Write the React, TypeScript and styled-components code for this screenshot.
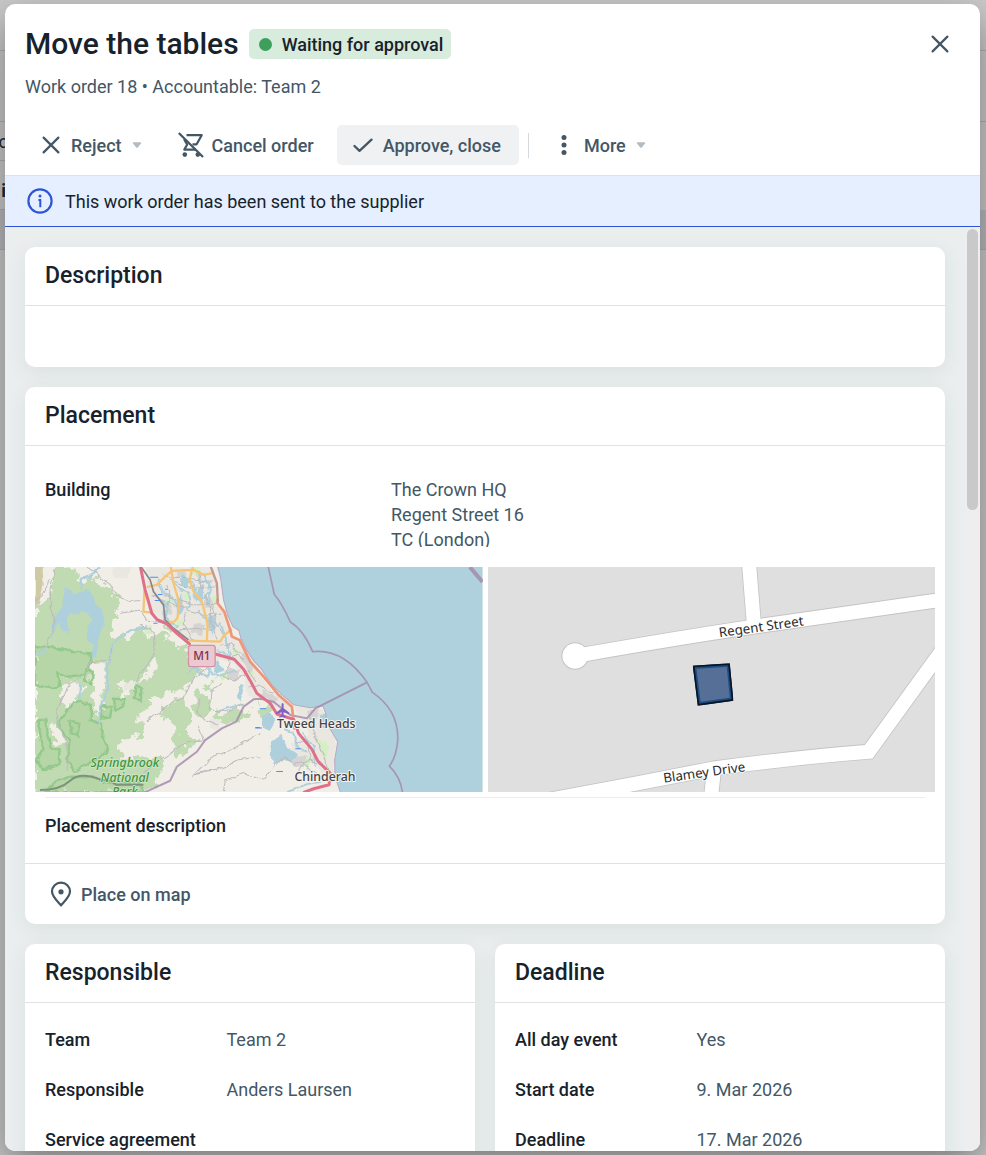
import React from "react";
import styled, { createGlobalStyle } from "styled-components";

const color = {
  ink: "#17222b",
  slate: "#435766",
  line: "#dfe1e2",
  canvas: "#eaeeef",
  blue: "#2f55d4",
};

const GlobalStyle = createGlobalStyle`
  *, *::before, *::after { box-sizing: border-box; }
  html, body, #root { height: 100%; }
  body {
    margin: 0;
    overflow: hidden;
    font-family: Roboto, "Liberation Sans", sans-serif;
    font-size: 18px;
    line-height: 25px;
    color: ${color.ink};
    background: #cacaca;
  }
  h1, h2, p, dl, dt, dd { margin: 0; }
  button { font: inherit; cursor: pointer; }
`;

/* Dimmed page that sits behind the dialog */
const Backdrop = styled.div`
  position: fixed;
  inset: 0;
  background: #cacaca;
  overflow: hidden;
`;

const BackdropBar = styled.div<{ $height: number; $shade?: string }>`
  height: ${(p) => p.$height}px;
  border-bottom: 1px solid #aeaeae;
  background: ${(p) => p.$shade ?? "transparent"};
`;

const BackdropCell = styled(BackdropBar)<{ $bold?: boolean }>`
  display: flex;
  align-items: center;
  justify-content: flex-end;
  width: ${(p) => (p.$bold ? 6 : 8)}px;
  padding-top: ${(p) => (p.$bold ? 10 : 0)}px;
  color: #1b2a36;
  font-weight: ${(p) => (p.$bold ? 700 : 400)};
`;

const Stage = styled.div`
  position: fixed;
  inset: 0;
  display: flex;
  padding: 4px 6px 4px 5px;
`;

const Dialog = styled.section`
  flex: 1;
  min-width: 0;
  display: flex;
  flex-direction: column;
  overflow: hidden;
  border-radius: 10px;
  background: #fff;
  box-shadow: 0 15px 40px rgba(0, 0, 0, 0.4);
`;

const Header = styled.header`
  padding: 20px 20px 10px;
  border-bottom: 1px solid ${color.line};
`;

const TitleRow = styled.div`
  display: flex;
  align-items: center;
  gap: 10px;
  height: 40px;
`;

const Title = styled.h1`
  font-size: 30px;
  line-height: 40px;
  font-weight: 500;
`;

const StatusChip = styled.span`
  display: flex;
  align-items: center;
  gap: 10px;
  height: 30px;
  padding: 0 8px 0 10px;
  border-radius: 5px;
  background: #d8ecdd;
  font-weight: 500;

  &::before {
    content: "";
    width: 13px;
    height: 13px;
    border-radius: 50%;
    background: #3ca05c;
  }
`;

const CloseButton = styled.button`
  display: grid;
  place-items: center;
  width: 40px;
  height: 40px;
  margin-left: auto;
  padding: 0;
  border: 0;
  background: none;
  color: ${color.slate};
`;

const Subtitle = styled.p`
  margin-top: 10px;
  color: ${color.slate};
`;

const Toolbar = styled.div`
  display: flex;
  align-items: center;
  gap: 5px;
  margin-top: 26px;
`;

const ToolButton = styled.button<{ $active?: boolean; $tight?: boolean; $menu?: boolean }>`
  display: flex;
  align-items: center;
  gap: ${(p) => (p.$tight ? 8 : 10)}px;
  height: 40px;
  padding: 0 ${(p) => (p.$menu ? 15 : 18)}px 0 16px;
  border: 0;
  border-radius: 5px;
  background: ${(p) => (p.$active ? "#f0f1f3" : "transparent")};
  color: ${color.slate};
  font-weight: 500;
  white-space: nowrap;
`;

const ToolDivider = styled.span`
  width: 1px;
  height: 25px;
  margin: 0 4px;
  background: #d3d9dd;
`;

const Banner = styled.div`
  display: flex;
  align-items: center;
  gap: 12px;
  height: 51px;
  padding: 0 22px;
  border-bottom: 1px solid ${color.blue};
  background: #e5efff;
  flex: none;
  svg { color: ${color.blue}; }
`;

const Body = styled.div`
  flex: 1;
  min-height: 0;
  display: flex;
  background: ${color.canvas};
`;

const Content = styled.main`
  flex: 1;
  min-width: 0;
  display: flex;
  flex-direction: column;
  gap: 20px;
  padding: 20px;
  overflow-y: auto;
  scrollbar-width: none;
`;

const ScrollTrack = styled.div`
  flex: none;
  width: 15px;
  padding: 2px;
  background: #eeeeee;
`;

const ScrollThumb = styled.div`
  width: 11px;
  height: 281px;
  border-radius: 6px;
  background: #c9c9c9;
`;

const Card = styled.section`
  flex: none;
  min-width: 0;
  border-radius: 10px;
  background: #fff;
  box-shadow: 0 5px 20px rgba(40, 60, 60, 0.08);
`;

const CardTitle = styled.h2`
  padding: 14px 20px;
  border-bottom: 1px solid ${color.line};
  font-size: 23px;
  line-height: 30px;
  font-weight: 500;
`;

const EmptyText = styled.div`
  height: 61px;
`;

const Columns = styled.div`
  display: grid;
  grid-template-columns: 1fr 1fr;
  gap: 20px;
`;

const Fields = styled.dl<{ $top?: number; $bottom?: number }>`
  display: flex;
  flex-direction: column;
  gap: 25px;
  padding: ${(p) => p.$top ?? 24}px 20px ${(p) => p.$bottom ?? 25}px;
`;

const Field = styled.div<{ $maxHeight?: number }>`
  display: grid;
  grid-template-columns: 35% 1fr;
  column-gap: 38px;
  min-height: 25px;
  overflow: ${(p) => (p.$maxHeight ? "hidden" : "visible")};
  max-height: ${(p) => (p.$maxHeight ? `${p.$maxHeight}px` : "none")};
  dt { font-weight: 500; white-space: nowrap; }
  dd { color: ${color.slate}; }
`;

const Maps = styled.div`
  display: grid;
  grid-template-columns: 1fr 1fr;
  gap: 5px;
  height: 225px;
  margin: 0 10px;
  svg { display: block; width: 100%; height: 225px; }
`;

const PlacementNote = styled.div`
  margin: 5px 20px 0;
  padding: 15px 0 25px;
  border-top: 1px solid #ececec;
  font-weight: 500;
`;

const CardFooter = styled.footer`
  display: flex;
  align-items: center;
  height: 61px;
  padding: 0 20px;
  border-top: 1px solid ${color.line};
`;

const LinkButton = styled.button`
  display: flex;
  align-items: center;
  gap: 9px;
  padding: 0 5px;
  border: 0;
  background: none;
  color: ${color.slate};
  font-weight: 500;
`;

const CrossIcon = () => (
  <svg width="20" height="20" viewBox="0 0 20 20" fill="none" stroke="currentColor" strokeWidth="2.2" strokeLinecap="round" aria-hidden="true">
    <path d="M2.6 2.6 17.4 17.4M17.4 2.6 2.6 17.4" />
  </svg>
);

const CheckIcon = () => (
  <svg width="20" height="20" viewBox="0 0 20 20" fill="none" stroke="currentColor" strokeWidth="2.3" strokeLinecap="round" strokeLinejoin="round" aria-hidden="true">
    <path d="M1.5 11 6.5 15.800 18.5 4.600" />
  </svg>
);

const CartOffIcon = () => (
  <svg width="26" height="26" viewBox="0 0 26 26" fill="none" stroke="currentColor" strokeWidth="2.2" strokeLinejoin="round" aria-hidden="true">
    <path d="M.8 1 25 25" strokeWidth="2.3" />
    <path d="M8.500 3.200H23.700L18.600 12.300H14.500M6 7.200 9.200 12.500 6.300 17.600H18" />
    <circle cx="6.800" cy="22.600" r="2.300" fill="currentColor" stroke="none" />
    <circle cx="19.800" cy="22.600" r="2.300" fill="currentColor" stroke="none" />
  </svg>
);

const DotsIcon = () => (
  <svg width="20" height="20" viewBox="0 0 20 20" fill="currentColor" aria-hidden="true">
    <circle cx="10" cy="2.6" r="2.5" />
    <circle cx="10" cy="10" r="2.5" />
    <circle cx="10" cy="17.4" r="2.5" />
  </svg>
);

const Caret = () => (
  <svg width="10" height="8" viewBox="0 0 10 8" fill="#b3bcc3" aria-hidden="true">
    <path d="M1.6 1.2h6.8q1.400.2.6 1.4L6 6.200q-1 1-2 0L1 2.600Q.2 1.400 1.600 1.200Z" />
  </svg>
);

const InfoIcon = () => (
  <svg width="26" height="26" viewBox="0 0 26 26" fill="none" stroke="currentColor" strokeWidth="2.2" aria-hidden="true">
    <circle cx="13" cy="13" r="11.600" />
    <circle cx="13" cy="8" r="1.500" fill="currentColor" stroke="none" />
    <path d="M11.400 12h1.900v7.200" strokeWidth="2" />
  </svg>
);

const PinIcon = () => (
  <svg width="22" height="26" viewBox="0 0 22 26" fill="none" stroke="currentColor" strokeWidth="2.2" strokeLinejoin="round" aria-hidden="true">
    <path d="M11 24.4C8 21 2 15.600 2 10.600A9 9 0 0 1 20 10.600C20 15.600 14 21 11 24.400Z" />
    <circle cx="11" cy="10.800" r="2.600" fill="currentColor" stroke="none" />
  </svg>
);

const woods = [
  "M75 21 132 21 150 62 190 45 235 80 272 125 262 165 240 205 246 245 290 225 330 205 355 228 382 222 420 228 450 255 475 262 475 320 520 322 505 350 478 362 450 392 405 405 352 432 328 470 352 498 310 540 282 568 262 612 300 600 400 590 396 635 352 696 15 696 15 135 60 105Z",
  "M498 400 535 408 545 445 520 478 488 455Z",
  "M395 435 460 412 486 470 476 520 510 545 475 565 440 585 420 545 440 505 400 475Z",
  "M555 468 600 446 660 450 625 490 575 492Z",
  "M400 190 430 200 420 215 395 205Z",
  "M525 365 545 372 532 395Z",
  "M682 430 712 430 725 452 700 480 682 468Z",
  "M852 498 872 515 880 540 856 545Z",
];

const clearings = [
  "M186 305 232 318 225 350 217 420 212 470 190 440 183 385 176 350Z",
  "M55 505 78 485 95 520 110 555 85 550 60 525Z",
  "M118 370 160 372 140 425 112 440 92 405Z",
  "M262 370 310 362 300 400 270 410Z",
  "M280 130 330 150 310 200 262 185Z",
  "M265 548 315 520 330 545 290 575 270 590Z",
  "M355 310 385 285 372 340 330 360Z",
  "M160 40 205 40 185 62Z",
  "M310 478 395 440 390 452 345 490Z",
];

const parks = [
  "M15 258 62 262 112 272 178 280 182 304 165 345 112 350 82 335 88 380 62 385 15 375Z",
  "M125 432 150 422 182 432 182 480 210 490 232 572 200 600 132 632 112 602 118 545 82 492Z",
  "M22 482 46 476 50 520 62 560 92 568 88 615 40 628 20 600 40 562Z",
  "M218 438 245 440 240 472 216 476Z",
  "M252 416 284 418 278 440 255 452Z",
  "M316 376 334 382 332 424 312 412Z",
  "M168 328 188 332 185 370 165 362Z",
  "M40 696 70 668 120 650 190 652 240 672 330 666 345 696Z",
  "M122 485 148 490 142 530 125 520Z",
];

const suburbs = [
  "M345 21 548 21 562 120 588 180 600 230 640 258 672 320 720 385 785 440 775 465 700 420 655 410 640 350 600 300 560 300 470 240 400 180 355 150Z",
  "M250 21 305 21 290 55 250 52Z",
  "M540 475 575 478 560 510 538 505Z",
  "M285 370 318 362 312 390 282 392Z",
  "M790 440 870 440 915 545 908 640 885 660 850 600 790 590 785 550 840 520Z",
];

const estates = [
  "M440 30 470 32 466 55 442 52Z",
  "M488 190 525 195 515 225 480 218Z",
  "M405 135 428 140 420 165 400 160Z",
  "M520 110 545 115 550 150 524 145Z",
  "M590 320 630 330 620 360 580 350Z",
  "M640 275 668 318 660 340 632 300Z",
  "M700 390 745 420 730 430 690 405Z",
  "M790 585 830 590 820 625 788 615Z",
  "M830 450 868 448 860 478 835 475Z",
];

const waters = [
  "M108 82 132 102 178 88 192 128 222 158 220 205 205 242 198 292 182 290 188 252 168 238 170 205 188 175 158 150 148 165 118 158 112 190 118 222 96 215 84 182 62 240 66 190 92 140Z",
  "M455 40 478 60 470 85 452 75Z",
  "M500 90 520 70 512 130 498 120Z",
  "M440 120 456 100 458 160 440 170Z",
  "M540 170 560 185 548 225 535 200Z",
  "M565 300 580 330 558 345 552 325Z",
  "M632 372 645 380 632 425 622 405Z",
  "M695 470 715 455 738 480 720 510 698 500Z",
  "M722 545 755 520 770 560 800 580 785 605 755 600 735 615 722 590Z",
  "M868 460 888 462 888 505 870 500Z",
];

const creeks = [
  "M385 60 400 100 430 110 445 150",
  "M460 60 490 70 500 120 540 100",
  "M520 40 545 90 530 140",
  "M500 40 512 62 538 66 534 92",
  "M430 70 450 92 476 98 482 132 466 150",
  "M505 150 520 175 550 172 562 200",
  "M395 120 412 150 408 172 430 196",
  "M570 190 590 240 600 290 560 270",
  "M500 290 560 350 620 330",
  "M470 345 490 320 530 350 545 330",
  "M560 455 640 430",
  "M770 696 830 672 870 665",
  "M410 130 400 180 445 200",
  "M765 510 790 520 800 560 830 575",
  "M815 520 850 560 855 620",
];

const minorRoads = [
  "M80 21 60 90 62 140 75 180 60 230 50 260 30 272",
  "M170 21 240 70 262 110 300 125 330 122",
  "M15 130 40 100 60 60",
  "M245 255 240 300 180 305 165 345 120 370 95 420 78 460 82 490 108 545 112 630",
  "M330 195 372 215 375 260 362 300 310 372",
  "M270 160 330 150 350 180 405 188",
  "M530 325 485 360 462 410 430 425 385 460 350 480",
  "M575 370 545 395 540 450 590 455 640 430",
  "M510 410 500 450 520 480 560 495",
  "M505 500 520 540 470 545 420 580 380 605 340 640",
  "M500 640 580 622 620 600 690 590",
  "M690 520 600 570 540 595 490 645 560 630",
  "M580 696 585 660 640 640 700 660",
  "M400 105 450 120 500 135 560 130",
  "M420 60 460 80 520 85 560 80",
  "M470 150 530 165 570 160",
  "M440 210 500 205 545 215",
  "M395 40 420 55 455 52 500 62 545 60",
  "M360 105 392 120 440 140 470 138",
  "M468 160 462 195 490 240",
  "M505 30 512 80 530 125 545 180 560 235",
  "M545 140 560 190 580 225",
  "M410 75 418 110 412 140",
  "M570 260 600 250 620 275 660 300",
  "M590 300 620 285 640 300",
  "M600 300 580 350 610 360 640 345",
  "M640 350 655 330 680 365",
  "M655 385 690 375 715 395 750 405",
  "M700 660 760 590 790 610 850 600",
  "M795 550 830 540 840 600 880 620",
  "M835 470 850 520 870 560 900 640",
  "M800 640 820 610 860 640",
];

const RegionMap = () => (
  <svg viewBox="15 21 1341 675" preserveAspectRatio="xMidYMid slice" role="img" aria-label="Region map">
    <defs>
      <filter id="ragged" x="-5%" y="-5%" width="110%" height="110%">
        <feTurbulence type="fractalNoise" baseFrequency="0.035" numOctaves="4" seed="7" result="n" />
        <feDisplacementMap in="SourceGraphic" in2="n" scale="52" xChannelSelector="R" yChannelSelector="G" />
      </filter>
      <filter id="wobble" x="-5%" y="-5%" width="110%" height="110%">
        <feTurbulence type="fractalNoise" baseFrequency="0.04" numOctaves="2" seed="3" result="n" />
        <feDisplacementMap in="SourceGraphic" in2="n" scale="16" xChannelSelector="R" yChannelSelector="G" />
      </filter>
    </defs>
    <rect x="15" y="21" width="1341" height="675" fill="#f1eee8" />
    <g filter="url(#ragged)">
      {woods.map((d) => <path key={d} d={d} fill="#c0dab2" />)}
      {clearings.map((d) => <path key={d} d={d} fill="#f1eee8" />)}
    </g>
    <g filter="url(#wobble)">
      {suburbs.map((d) => <path key={d} d={d} fill="#eae7e1" />)}
      {estates.map((d) => <path key={d} d={d} fill="#d6d4d3" />)}
      {parks.map((d) => (
        <path key={d} d={d} fill="#a9d09c" fillOpacity=".4" stroke="#93c98b" strokeWidth="7" />
      ))}
      <path d="M15 21h22l4 50-14 60-12 10Z" fill="#cfc9a4" />
      <g fill="#d4efc4">
        <path d="M340 200h25v22h-25ZM400 120l25-8 8 20-25 10ZM525 175l20-5 5 25-22 5ZM565 345l22-12 5 18-20 12ZM480 25l30-4 5 18-25 4ZM460 100l18-4 4 22-18 4ZM548 110l14 4-2 18-14-4ZM440 182l20-2 2 16-20 2ZM605 270l18-6 6 16-18 6ZM862 540l28 10 5 42-22-10ZM828 590l15 8-8 30-14-12ZM655 330l18 5-8 18Z" />
      </g>
      {waters.map((d) => <path key={d} d={d} fill="#aed0dd" />)}
    </g>
    <g fill="none" stroke="#aed0dd" filter="url(#wobble)">
      <path d="M155 90 155 60 185 45 210 21M260 240 245 255 240 300 228 330 235 385 215 430 208 490M260 240 300 215 350 200M150 370 148 420M15 290 50 270" strokeWidth="7" />
      {creeks.map((d) => <path key={d} d={d} strokeWidth="6" />)}
    </g>
    <g fill="none" stroke="#bdbabd" strokeWidth="3" filter="url(#wobble)">
      {minorRoads.map((d) => <path key={d} d={d} />)}
    </g>
    <path
      d="M560 21 572 60 580 120 592 165 608 200 626 212 632 235 648 268 672 305 692 325 708 350 725 375 760 408 790 434 840 443 878 438 886 460 890 490 922 545 913 600 914 650 930 696H1356V21Z"
      fill="#aed1dd"
    />
    <path d="M564 21 572 60 580 120 592 165 608 200 626 212 632 235 648 268 672 305 692 325 708 350 725 375 760 408 790 434 840 443 878 438 886 460 890 490 922 545 913 600 914 650 930 696" fill="none" stroke="#b9a9c2" strokeWidth="3" />
    <path d="M30 690q60 0 90-28t90-4l30 4 20 12h80" fill="none" stroke="#7f927c" strokeWidth="6" />
    <g fill="none" stroke="#a58cab" strokeLinejoin="round" opacity=".85">
      <path d="M345 696 420 662 440 620 500 575 525 540 575 505 618 485 640 440 670 418 690 416 730 425 780 465 830 475 855 445 1010 367" strokeWidth="6" />
      <path d="M714 21 732 103Q755 130 780 186 820 210 847 275 940 265 1010 367L1026 397Q1105 450 1102 540 1098 590 1077 618 1110 650 1116 696" strokeWidth="5" />
      <path d="M1318 21 1356 66" strokeWidth="12" />
    </g>
    <g fill="none" stroke="#f4c577" strokeWidth="7" strokeLinejoin="round">
      <path d="M350 82 380 75 405 50 425 33 490 30 520 45 548 40M422 21 430 70 448 130 442 175 432 185 408 187M488 21 478 60 490 95 515 125 532 190 530 245M475 242 570 245 582 225 605 208M343 90 340 155 362 158" />
    </g>
    <path d="M333 21 360 60 370 95 400 135 405 180 430 205 475 240" fill="none" stroke="#8a8588" strokeWidth="5" />
    <g fill="none" strokeLinejoin="round" strokeLinecap="round">
      <path d="M562 120 562 130 582 155 600 210 605 230 628 240 660 305 700 350 745 405 785 440 792 505" stroke="#ee9678" strokeWidth="8" />
      <path d="M542 21 560 70 563 125" stroke="#c39a90" strokeWidth="7" />
      <path d="M331 21 345 90 365 160 380 178 410 192 440 220 478 252M555 282 612 298 640 328 660 362 680 400 720 430 740 462 790 478 805 520 845 568 862 602 900 640 896 674 850 686 822 696" stroke="#e0708a" strokeWidth="9" />
    </g>
    <g stroke="#4d8ff0" strokeWidth="3">
      <path d="M360 52h24M383 104h14M374 122h16M370 190h12M675 502h14M688 446h20M675 504h20M738 634h20M795 566h15M405 88h8" />
    </g>
    <g transform="translate(757 450)" fill="#8460c4">
      <path d="M-3-18q3-6 6 0V-5L20 8v5L3 7v8l7 5v3L0 20l-10 3v-3l7-5V7l-17 6V8L-3-5Z" />
    </g>
    <rect x="475" y="256" width="80" height="64" rx="7" fill="#ecc8d0" stroke="#d392a3" strokeWidth="4" />
    <g fontFamily="'Noto Sans', 'Open Sans', sans-serif" textAnchor="middle" paintOrder="stroke" strokeLinejoin="round">
      <text x="515" y="301" fontSize="35" fontWeight="500" fill="#79304a">M1</text>
      <g fontSize="37" fontStyle="italic" fontWeight="500" fill="#3f9440" stroke="#d6e9cb" strokeWidth="4">
        <text x="284" y="621">Springbrook</text>
        <text x="284" y="665">National</text>
        <text x="284" y="707">Park</text>
      </g>
      <g fontSize="37" fontWeight="500" fill="#454347" stroke="#f5f3f0" strokeWidth="6">
        <text x="858" y="505">Tweed Heads</text>
        <text x="884" y="664">Chinderah</text>
      </g>
    </g>
  </svg>
);

const StreetMap = () => (
  <svg viewBox="21 21 1344 675" preserveAspectRatio="xMidYMid slice" role="img" aria-label="Street map">
    <defs>
      <clipPath id="lot">
        <path d="M636 317 747 310 758 422 651 437Z" />
      </clipPath>
    </defs>
    <rect x="21" y="21" width="1344" height="675" fill="#dfdfdf" />
    {[
      { stroke: "#c4c4c4", width: 47, radius: 41 },
      { stroke: "#ffffff", width: 42, radius: 38 },
    ].map((layer) => (
      <g key={layer.stroke} fill="none" stroke={layer.stroke} strokeWidth={layer.width}>
        <path d="M283 288Q600 232 820 200 1100 160 1400 117M804 0 820 200M190 722Q450 675 700 625 950 592 1164 575L1400 249M700 625 690 720" />
        <circle cx="283" cy="288" r={layer.radius} fill={layer.stroke} stroke="none" />
      </g>
    ))}
    <g clipPath="url(#lot)">
      <path d="M636 317 747 310 758 422 651 437Z" fill="#566f96" stroke="#1c4d85" strokeWidth="20" />
      <path d="M636 317 747 310 758 422 651 437Z" fill="none" stroke="#0b1420" strokeWidth="10" />
    </g>
    <g fontFamily="'Noto Sans', 'Open Sans', sans-serif" fontSize="40" fill="#2a2a2a" textAnchor="middle" stroke="#fff" strokeWidth="5" paintOrder="stroke" strokeLinejoin="round">
      <text transform="translate(843 214) rotate(-8)">Regent Street</text>
      <text transform="translate(672 651) rotate(-8)">Blamey Drive</text>
    </g>
  </svg>
);

const responsible = [
  ["Team", "Team 2"],
  ["Responsible", "Anders Laursen"],
  ["Service agreement", ""],
];

const deadline = [
  ["All day event", "Yes"],
  ["Start date", "9. Mar 2026"],
  ["Deadline", "17. Mar 2026"],
];

const FieldCard = ({ title, rows }: { title: string; rows: string[][] }) => (
  <Card>
    <CardTitle>{title}</CardTitle>
    <Fields>
      {rows.map(([label, value]) => (
        <Field key={label}>
          <dt>{label}</dt>
          <dd>{value}</dd>
        </Field>
      ))}
    </Fields>
  </Card>
);

export default function App() {
  return (
    <>
      <GlobalStyle />
      <Backdrop aria-hidden="true">
        <BackdropBar $height={51} />
        <BackdropBar $height={71} />
        <BackdropCell $height={39}>c</BackdropCell>
        <BackdropCell $height={49} $bold>i</BackdropCell>
        <BackdropBar $height={40} $shade="#b8babd" />
      </Backdrop>
      <Stage>
        <Dialog role="dialog" aria-modal="true" aria-labelledby="order-title">
          <Header>
            <TitleRow>
              <Title id="order-title">Move the tables</Title>
              <StatusChip>Waiting for approval</StatusChip>
              <CloseButton type="button" aria-label="Close"><CrossIcon /></CloseButton>
            </TitleRow>
            <Subtitle>Work order 18 • Accountable: Team 2</Subtitle>
            <Toolbar role="toolbar" aria-label="Work order actions">
              <ToolButton type="button" $menu><CrossIcon />Reject<Caret /></ToolButton>
              <ToolButton type="button" $tight><CartOffIcon />Cancel order</ToolButton>
              <ToolButton type="button" $active><CheckIcon />Approve, close</ToolButton>
              <ToolDivider />
              <ToolButton type="button" $menu><DotsIcon />More<Caret /></ToolButton>
            </Toolbar>
          </Header>
          <Banner role="status"><InfoIcon />This work order has been sent to the supplier</Banner>
          <Body>
            <Content>
              <Card>
                <CardTitle>Description</CardTitle>
                <EmptyText />
              </Card>
              <Card>
                <CardTitle>Placement</CardTitle>
                <Fields $top={31} $bottom={20}>
                  <Field $maxHeight={70}>
                    <dt>Building</dt>
                    <dd>The Crown HQ<br />Regent Street 16<br />TC (London)</dd>
                  </Field>
                </Fields>
                <Maps>
                  <RegionMap />
                  <StreetMap />
                </Maps>
                <PlacementNote>Placement description</PlacementNote>
                <CardFooter>
                  <LinkButton type="button"><PinIcon />Place on map</LinkButton>
                </CardFooter>
              </Card>
              <Columns>
                <FieldCard title="Responsible" rows={responsible} />
                <FieldCard title="Deadline" rows={deadline} />
              </Columns>
            </Content>
            <ScrollTrack>
              <ScrollThumb />
            </ScrollTrack>
          </Body>
        </Dialog>
      </Stage>
    </>
  );
}
